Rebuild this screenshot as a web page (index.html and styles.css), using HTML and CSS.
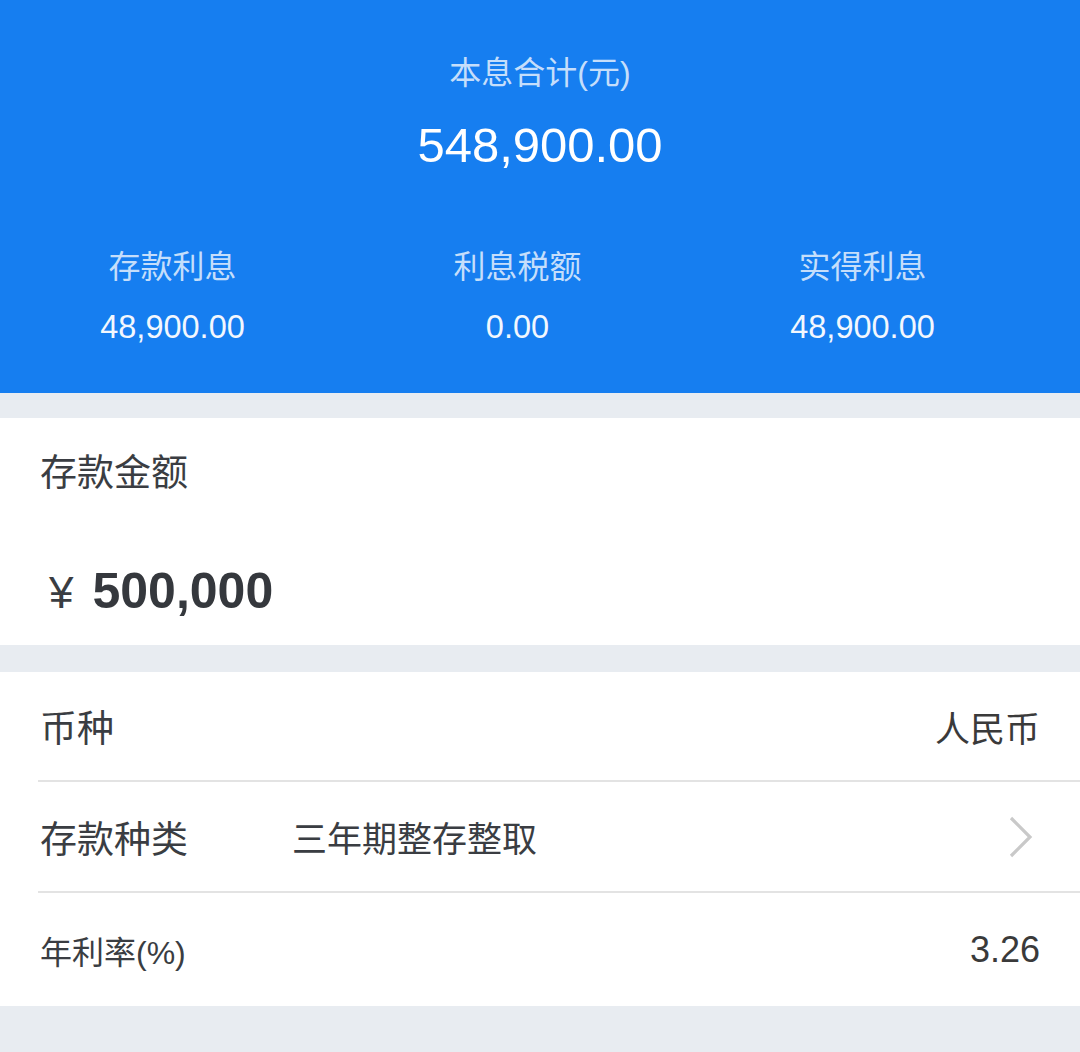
FILE: index.html
```html
<!DOCTYPE html>
<html lang="zh-CN">
<head>
  <meta charset="UTF-8" />
  <meta name="viewport" content="width=device-width, initial-scale=1.0"/>
  <title>存款计算器</title>
  <link rel="stylesheet" href="styles.css">
</head>
<body>

<header class="summary">
  <div class="summary-title">本息合计(元)</div>
  <div class="summary-total">548,900.00</div>
  <div class="summary-cols">
    <div class="col">
      <div class="col-label">存款利息</div>
      <div class="col-value">48,900.00</div>
    </div>
    <div class="col">
      <div class="col-label">利息税额</div>
      <div class="col-value">0.00</div>
    </div>
    <div class="col">
      <div class="col-label">实得利息</div>
      <div class="col-value">48,900.00</div>
    </div>
  </div>
</header>

<section class="card amount">
  <div class="amount-label">存款金额</div>
  <div class="amount-value"><span class="yen">¥</span><span class="num">500,000</span></div>
</section>

<section class="card list">
  <div class="row">
    <span class="row-label">币种</span>
    <span class="row-value">人民币</span>
  </div>
  <div class="row">
    <span class="row-label">存款种类</span>
    <span class="row-pick">三年期整存整取</span>
    <svg class="chevron" width="26" height="42" viewBox="0 0 26 42">
      <path d="M3 2 L22 21 L3 40" fill="none" stroke="#c9c9c9" stroke-width="3.2"/>
    </svg>
  </div>
  <div class="row small">
    <span class="row-label">年利率(%)</span>
    <span class="row-value num-plain">3.26</span>
  </div>
</section>

</body>
</html>
```

FILE: styles.css
```css
body {
  margin: 0;
  padding: 0;
  font-family: "Liberation Sans", "Noto Sans CJK SC", sans-serif;
  background: #e8ecf1;
  color: #3a3d42;
}
.summary {
  background: #167ef0;
  height: 393px;
  box-sizing: border-box;
  padding-top: 51px;
  text-align: center;
}
.summary-title {
  font-size: 32px;
  line-height: 44px;
  color: #c5defb;
}
.summary-total {
  font-size: 49px;
  line-height: 56px;
  margin-top: 22px;
  color: #ffffff;
}
.summary-cols {
  display: grid;
  grid-template-columns: repeat(3, 345px);
  margin-top: 72px;
}
.col-label {
  font-size: 32px;
  line-height: 44px;
  color: #c5defb;
}
.col-value {
  font-size: 32.5px;
  line-height: 40px;
  margin-top: 18px;
  color: #f2f7fe;
}
.card {
  background: #ffffff;
}
.amount {
  margin-top: 25px;
  height: 227px;
  box-sizing: border-box;
  padding: 32px 40px 0 40px;
}
.amount-label {
  font-size: 37px;
  line-height: 48px;
}
.amount-value {
  margin-top: 64px;
  display: flex;
  align-items: baseline;
  padding-left: 9px;
}
.yen {
  font-size: 44px;
  margin-right: 19px;
}
.num {
  font-size: 50px;
  font-weight: bold;
  color: #35383d;
}
.list {
  margin-top: 27px;
  padding-left: 38px;
  height: 334px;
  box-sizing: border-box;
}
.row {
  display: flex;
  align-items: center;
  height: 108px;
  padding-right: 40px;
  border-bottom: 2px solid #e3e3e3;
  font-size: 35px;
}
.row:nth-child(2) {
  height: 109px;
}
.row.small {
  border-bottom: none;
  height: 113px;
  font-size: 32px;
}
.row-label {
  font-size: 37px;
  padding-left: 2px;
  width: 252px;
}
.row.small .row-label {
  font-size: 32px;
}
.row-value {
  margin-left: auto;
  color: #3a3a3a;
}
.row-pick {
  color: #3a3d42;
}
.chevron {
  margin-left: auto;
  margin-right: 6px;
}
.num-plain {
  font-size: 36px;
}
```
